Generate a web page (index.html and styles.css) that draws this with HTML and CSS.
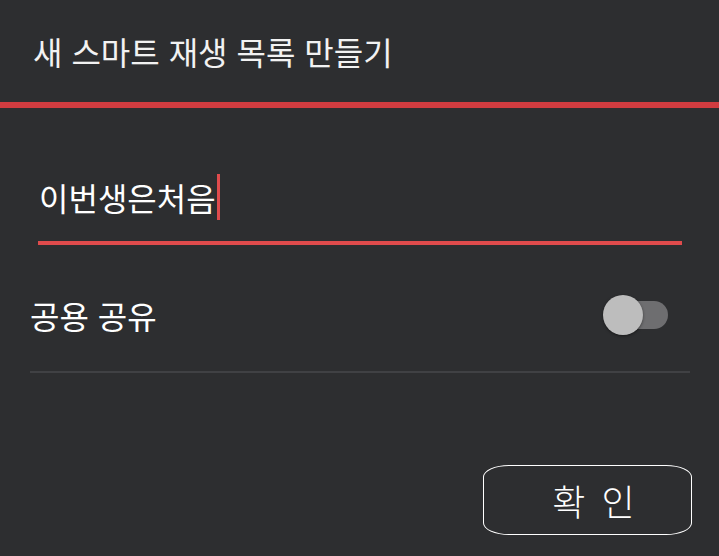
FILE: index.html
```html
<!DOCTYPE html>
<html lang="ko">
<head>
<meta charset="utf-8">
<title>새 스마트 재생 목록 만들기</title>
<link rel="stylesheet" href="styles.css">
</head>
<body>
<div class="dialog">
  <header class="dialog-header">
    <h1 class="dialog-title">새 스마트 재생 목록 만들기</h1>
  </header>
  <div class="accent-bar"></div>
  <div class="field">
    <span class="field-text">이번생은처음</span><span class="caret"></span>
  </div>
  <div class="setting-row">
    <span class="setting-label">공용 공유</span>
    <div class="toggle">
      <div class="toggle-track"></div>
      <div class="toggle-thumb"></div>
    </div>
  </div>
  <div class="actions">
    <button class="confirm-btn">확 인</button>
  </div>
</div>
</body>
</html>
```
FILE: styles.css
```css
html, body {
  margin: 0;
  padding: 0;
  background: #2d2e30;
}
body {
  width: 719px;
  height: 556px;
  overflow: hidden;
  font-family: "Noto Sans CJK KR", "Noto Sans", sans-serif;
  color: #f4f4f4;
}
.dialog {
  display: flex;
  flex-direction: column;
}
.dialog-header {
  height: 102px;
  display: flex;
  align-items: center;
  padding-left: 33px;
  box-sizing: border-box;
}
.dialog-title {
  margin: 0;
  font-size: 32px;
  font-weight: 400;
  line-height: 40px;
  color: #f2f2f2;
}
.accent-bar {
  height: 6px;
  background: #d13c40;
}
.field {
  margin: 0 37px 0 38px;
  padding: 66px 0 21px 1px;
  border-bottom: 4px solid #e04b4c;
  display: flex;
  align-items: center;
  height: 46px;
  box-sizing: content-box;
}
.field-text {
  font-size: 32px;
  line-height: 46px;
  color: #ffffff;
}
.caret {
  width: 3px;
  height: 46px;
  background: #e04b4c;
  margin-left: 1px;
}
.setting-row {
  margin: 0 29px 0 30px;
  padding: 50px 22px 36px 0;
  border-bottom: 2px solid #404144;
  display: flex;
  align-items: center;
  justify-content: space-between;
}
.setting-label {
  font-size: 32px;
  line-height: 40px;
  color: #ffffff;
}
.toggle {
  position: relative;
  width: 65px;
  height: 40px;
}
.toggle-track {
  position: absolute;
  left: 10px;
  right: 0;
  top: 6px;
  height: 28px;
  border-radius: 14px;
  background: #6e6e70;
}
.toggle-thumb {
  position: absolute;
  left: 0;
  top: 0;
  width: 40px;
  height: 40px;
  border-radius: 50%;
  background: #bdbdbd;
  box-shadow: 0 1px 3px rgba(0, 0, 0, 0.45);
}
.actions {
  display: flex;
  justify-content: flex-end;
  padding: 92px 27px 0 0;
}
.confirm-btn {
  width: 209px;
  height: 70px;
  box-sizing: border-box;
  border: 1px solid #ffffff;
  border-radius: 26px / 12px;
  background: transparent;
  color: #ffffff;
  font-family: "Noto Sans CJK KR", "Noto Sans", sans-serif;
  font-size: 36px;
  font-weight: 300;
  letter-spacing: 3px;
  padding: 0 0 0 15px;
  line-height: 40px;
}
```
